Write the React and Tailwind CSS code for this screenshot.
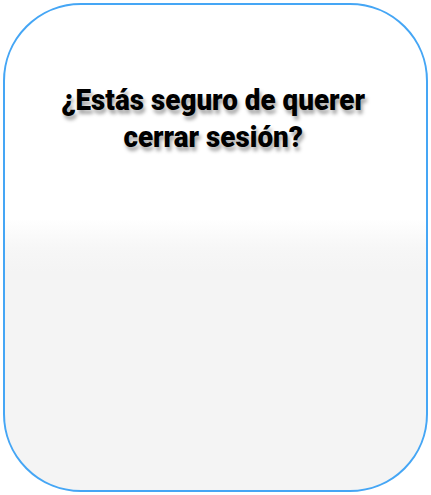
export default function App() {
  return (
    <div className="w-[431px] h-[495px] bg-white p-[3px]">
      <div className="w-full h-full rounded-[78px] border-[2.5px] border-[#45a6f5] bg-[linear-gradient(to_bottom,#ffffff_0%,#ffffff_44%,#f7f7f7_50%,#f4f4f4_55%,#f4f4f4_100%)] flex flex-col items-center pt-[77px] pr-[5px]">
        <h1
          className="text-center text-black font-black text-[29px] leading-[37px] scale-x-[0.96] [text-shadow:2px_4px_4px_rgba(0,0,0,0.35)] whitespace-nowrap"
          style={{ fontFamily: 'Roboto, "DejaVu Sans Condensed", sans-serif' }}
        >
          ¿Estás seguro de querer
          <br />
          cerrar sesión?
        </h1>
      </div>
    </div>
  );
}
